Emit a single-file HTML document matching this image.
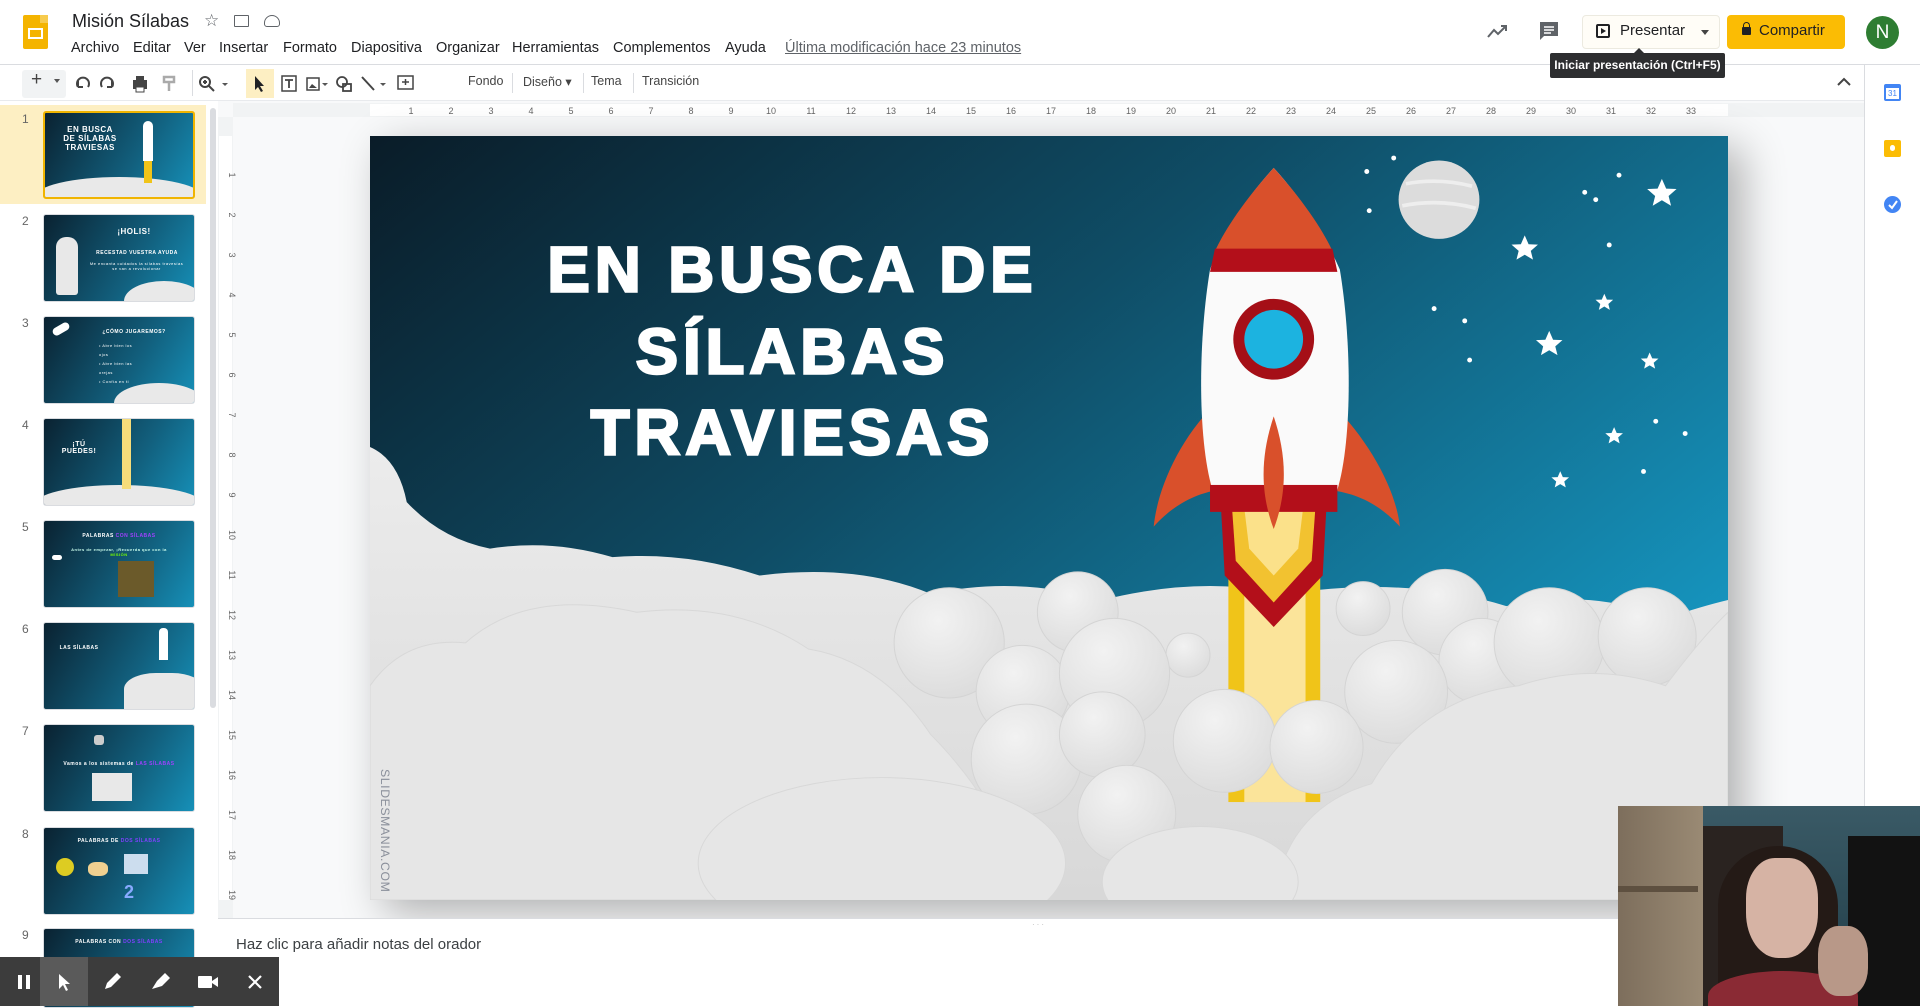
<!DOCTYPE html>
<html><head><meta charset="utf-8"><style>
*{box-sizing:border-box;margin:0;padding:0}
body{width:1920px;height:1006px;overflow:hidden;background:#fff;font-family:"Liberation Sans",Arial,sans-serif;position:relative;color:#3c4043}
.a{position:absolute}
.menu span{position:absolute;top:40px;font-size:14.5px;color:#202124;white-space:nowrap}
.tb{position:absolute;top:74px;font-size:12.5px;color:#444}
.num{position:absolute;left:22px;font-size:12px;color:#666}
.th{position:absolute;left:43px;width:152px;height:88px;border:1px solid #dadce0;border-radius:3px;overflow:hidden;background:linear-gradient(120deg,#0a2231,#12607e 60%,#1690b8)}
.th .cl{position:absolute;left:-10px;right:-10px;bottom:-20px;height:40px;background:#e9e9e9;border-radius:50% 50% 0 0}
.th .t{position:absolute;color:#fff;font-weight:bold;font-size:7px;text-align:center;letter-spacing:.5px}
.ctl{position:absolute;top:957px;width:48px;height:49px;display:flex;align-items:center;justify-content:center}
</style></head><body>

<!-- header -->
<div class="a" style="left:23px;top:15px;width:25px;height:34px;background:#f4b400;border-radius:2px"></div>
<div class="a" style="left:40px;top:15px;width:8px;height:8px;background:#f7cb4d"></div>
<div class="a" style="left:28px;top:28px;width:15px;height:11px;border:2px solid #fff"></div>
<div class="a" style="left:72px;top:11px;font-size:18px;color:#202124">Misión Sílabas</div>
<div class="a" style="left:204px;top:11px;font-size:17px;color:#5f6368">☆</div>
<div class="a" style="left:234px;top:15px;width:15px;height:12px;border:1.5px solid #5f6368;border-radius:1px"></div>
<div class="a" style="left:264px;top:15px;width:16px;height:12px;border:1.5px solid #5f6368;border-radius:8px 8px 3px 3px"></div>
<div class="menu">
<span style="left:71px">Archivo</span><span style="left:133px">Editar</span><span style="left:184px">Ver</span><span style="left:219px">Insertar</span><span style="left:283px">Formato</span><span style="left:351px">Diapositiva</span><span style="left:436px">Organizar</span><span style="left:512px">Herramientas</span><span style="left:613px">Complementos</span><span style="left:725px">Ayuda</span><span style="left:785px;color:#5f6368;text-decoration:underline">Última modificación hace 23 minutos</span>
</div>
<svg class="a" style="left:1486px;top:21px" width="24" height="20"><path d="M2 16 L8 9 L12 13 L20 5 M15 5 H20 V10" stroke="#5f6368" stroke-width="2" fill="none"/></svg>
<svg class="a" style="left:1538px;top:20px" width="22" height="22"><path d="M2 2 H20 V16 H6 L2 20 Z" fill="#5f6368"/><path d="M6 7H16M6 10H16M6 13H13" stroke="#fff" stroke-width="1.5"/></svg>
<div class="a" style="left:1582px;top:15px;width:138px;height:34px;border:1px solid #eceae0;border-radius:4px;background:#fffdf7"></div>
<div class="a" style="left:1596px;top:24px;width:14px;height:14px;border:2px solid #202124;border-radius:2px"></div>
<div class="a" style="left:1601px;top:28px;width:0;height:0;border-left:5px solid #202124;border-top:3px solid transparent;border-bottom:3px solid transparent"></div>
<div class="a" style="left:1620px;top:22px;font-size:15px;color:#202124">Presentar</div>
<div class="a" style="left:1701px;top:30px;border-left:4px solid transparent;border-right:4px solid transparent;border-top:5px solid #444"></div>
<div class="a" style="left:1727px;top:15px;width:118px;height:34px;background:#fbbc04;border-radius:4px"></div>
<div class="a" style="left:1742px;top:27px;width:9px;height:8px;background:#202124;border-radius:1px"></div>
<div class="a" style="left:1743px;top:22px;width:7px;height:7px;border:1.5px solid #202124;border-bottom:none;border-radius:4px 4px 0 0"></div>
<div class="a" style="left:1759px;top:22px;font-size:15px;color:#202124">Compartir</div>
<div class="a" style="left:1866px;top:16px;width:33px;height:33px;border-radius:50%;background:#2e7d32;color:#fff;font-size:19px;text-align:center;line-height:33px">N</div>
<div class="a" style="left:0;top:64px;width:1920px;height:1px;background:#dadce0"></div>

<!-- toolbar -->
<div class="a" style="left:22px;top:70px;width:44px;height:28px;background:#f1f3f4;border-radius:3px"></div>
<div class="tb" style="left:31px;top:69px;font-size:19px;color:#444">+</div>
<div class="tb" style="left:54px;top:79px;border-left:3px solid transparent;border-right:3px solid transparent;border-top:4px solid #555"></div>
<svg class="a" style="left:74px;top:75px" width="120" height="18"><path d="M4 12 A6 6 0 1 1 14 12 M4 12 V6 M4 12 H9" stroke="#444" stroke-width="2" fill="none"/><path d="M38 12 A6 6 0 1 0 28 12 M38 12 V6 M38 12 H33" stroke="#444" stroke-width="2" fill="none"/><rect x="59" y="5" width="14" height="9" fill="#444"/><rect x="62" y="1" width="8" height="4" fill="#444"/><rect x="62" y="12" width="8" height="5" fill="#fff" stroke="#444"/><path d="M90 2 H100 V7 H90Z M95 7 V16" stroke="#aaa" stroke-width="2.5" fill="none"/></svg>
<div class="a" style="left:192px;top:70px;width:1px;height:26px;background:#dadce0"></div>
<svg class="a" style="left:198px;top:75px" width="40" height="18"><circle cx="7" cy="7" r="5" stroke="#444" stroke-width="2" fill="none"/><path d="M11 11 L16 16 M5 7H9M7 5V9" stroke="#444" stroke-width="2"/><path d="M24 8 L30 8 L27 11Z" fill="#555"/></svg>
<div class="a" style="left:246px;top:69px;width:28px;height:29px;background:#fdefc3"></div>
<svg class="a" style="left:248px;top:73px" width="170" height="22"><path d="M7 3 V17 L10 14 L13 19 L15 18 L12 13 L16 13 Z" fill="#202124"/><rect x="34" y="3" width="14" height="15" stroke="#444" stroke-width="1.5" fill="none"/><path d="M37 7 H45 M41 7 V15" stroke="#444" stroke-width="1.8"/><rect x="59" y="5" width="12" height="12" stroke="#444" stroke-width="1.5" fill="none"/><path d="M61 15 L64 11 L69 15Z" fill="#444"/><path d="M74 10 L80 10 L77 13Z" fill="#555"/><circle cx="94" cy="9" r="5" stroke="#444" stroke-width="1.8" fill="none"/><rect x="95" y="11" width="8" height="7" stroke="#444" stroke-width="1.8" fill="none"/><path d="M114 4 L126 17" stroke="#444" stroke-width="2"/><path d="M132 10 L138 10 L135 13Z" fill="#555"/><rect x="150" y="3" width="15" height="13" stroke="#444" stroke-width="1.5" fill="none"/><path d="M154 9 H161 M157.5 6 V12" stroke="#444" stroke-width="1.5"/></svg>
<div class="tb" style="left:468px">Fondo</div>
<div class="a" style="left:512px;top:73px;width:1px;height:20px;background:#dadce0"></div>
<div class="tb" style="left:523px">Diseño ▾</div>
<div class="a" style="left:583px;top:73px;width:1px;height:20px;background:#dadce0"></div>
<div class="tb" style="left:591px">Tema</div>
<div class="a" style="left:633px;top:73px;width:1px;height:20px;background:#dadce0"></div>
<div class="tb" style="left:642px">Transición</div>
<svg class="a" style="left:1836px;top:77px" width="16" height="10"><path d="M2 8 L8 2 L14 8" stroke="#444" stroke-width="2" fill="none"/></svg>
<div class="a" style="left:0;top:100px;width:1864px;height:1px;background:#e8eaed"></div>

<!-- tooltip -->
<div class="a" style="left:1550px;top:53px;width:175px;height:25px;background:#2d2e30;border-radius:2px;color:#fff;font-size:12px;font-weight:bold;line-height:25px;text-align:center">Iniciar presentación (Ctrl+F5)</div>
<div class="a" style="left:1634px;top:48px;border-left:5px solid transparent;border-right:5px solid transparent;border-bottom:5px solid #2d2e30"></div>

<!-- right sidebar -->
<div class="a" style="left:1864px;top:65px;width:56px;height:941px;background:#fff;border-left:1px solid #dadce0"></div>
<div class="a" style="left:1884px;top:84px;width:17px;height:17px;border:2px solid #4285f4;border-radius:2px;font-size:8px;color:#4285f4;text-align:center;line-height:12px;border-top-width:4px">31</div>
<div class="a" style="left:1884px;top:140px;width:17px;height:17px;background:#fbbc04;border-radius:2px"></div>
<div class="a" style="left:1890px;top:145px;width:5px;height:6px;background:#fff;border-radius:3px"></div>
<div class="a" style="left:1884px;top:196px;width:17px;height:17px;background:#4285f4;border-radius:50%"></div>
<svg class="a" style="left:1884px;top:196px" width="17" height="17"><path d="M5 9 L8 12 L13 5" stroke="#fff" stroke-width="2" fill="none"/></svg>

<!-- filmstrip -->
<div class="a" style="left:0;top:105px;width:206px;height:99px;background:#fdefc3"></div>
<div class="a" style="left:210px;top:108px;width:6px;height:600px;background:#dadce0;border-radius:3px"></div>
<div class="num" style="top:112px">1</div><div class="num" style="top:214px">2</div><div class="num" style="top:316px">3</div><div class="num" style="top:418px">4</div><div class="num" style="top:520px">5</div><div class="num" style="top:622px">6</div><div class="num" style="top:724px">7</div><div class="num" style="top:827px">8</div><div class="num" style="top:928px">9</div>

<div class="th" style="top:111px;border:2px solid #f0b400"><div class="cl"></div><div class="t" style="left:15px;top:12px;width:60px;font-size:8px">EN BUSCA DE SÍLABAS TRAVIESAS</div><div class="a" style="left:98px;top:8px;width:10px;height:40px;background:#fff;border-radius:5px 5px 0 0"></div><div class="a" style="left:99px;top:48px;width:8px;height:22px;background:#f0c419"></div></div>
<div class="th" style="top:214px"><div class="cl" style="left:80px"></div><div class="a" style="left:12px;top:22px;width:22px;height:58px;background:#e8e8e8;border-radius:10px 10px 3px 3px"></div><div class="t" style="left:40px;top:12px;width:100px;font-size:8px">¡HOLIS!</div><div class="t" style="left:38px;top:35px;width:110px;font-size:5px">RECESTAD VUESTRA AYUDA</div><div class="t" style="left:45px;top:46px;width:95px;font-size:4px;font-weight:normal">Me encanta cuidados la sílabas travesías se van a revolucionar</div></div>
<div class="th" style="top:316px"><div class="cl" style="left:70px"></div><div class="t" style="left:50px;top:12px;width:80px;font-size:5px">¿CÓMO JUGAREMOS?</div><div class="t" style="left:55px;top:24px;width:40px;font-size:4px;font-weight:normal;text-align:left;line-height:9px">• Abre bien los ojos<br>• Abre bien las orejas<br>• Confía en ti</div><div class="a" style="left:8px;top:8px;width:18px;height:8px;background:#fff;border-radius:4px;transform:rotate(-30deg)"></div></div>
<div class="th" style="top:418px"><div class="cl"></div><div class="t" style="left:10px;top:22px;width:50px;font-size:7px">¡TÚ PUEDES!</div><div class="a" style="left:78px;top:0;width:9px;height:70px;background:#f6dc7a"></div></div>
<div class="th" style="top:520px"><div class="t" style="left:20px;top:12px;width:110px;font-size:5px">PALABRAS <span style="color:#a040ff">CON SÍLABAS</span></div><div class="t" style="left:20px;top:26px;width:110px;font-size:4px;color:#cfe">Antes de empezar, ¡Recuerda que con la <span style="color:#7f0">MÍSIÓN</span></div><div class="a" style="left:74px;top:40px;width:36px;height:36px;background:#6b5a2a"></div><div class="a" style="left:8px;top:34px;width:10px;height:5px;background:#fff;border-radius:3px"></div></div>
<div class="th" style="top:622px"><div class="a" style="left:80px;top:50px;width:80px;height:40px;background:#e8e8e8;border-radius:40% 40% 0 0"></div><div class="t" style="left:10px;top:22px;width:50px;font-size:5px">LAS SÍLABAS</div><div class="a" style="left:115px;top:5px;width:9px;height:32px;background:#fff;border-radius:4px 4px 0 0"></div></div>
<div class="th" style="top:724px"><div class="t" style="left:10px;top:36px;width:130px;font-size:5px">Vamos a los sistemas de <span style="color:#a040ff">LAS SÍLABAS</span></div><div class="a" style="left:48px;top:48px;width:40px;height:28px;background:#e8e8e8"></div><div class="a" style="left:50px;top:10px;width:10px;height:10px;background:#ccc;border-radius:3px"></div></div>
<div class="th" style="top:827px"><div class="t" style="left:15px;top:10px;width:120px;font-size:5px">PALABRAS DE <span style="color:#8040ff">DOS SÍLABAS</span></div><div class="a" style="left:12px;top:30px;width:18px;height:18px;background:#ddcc22;border-radius:50%"></div><div class="a" style="left:44px;top:34px;width:20px;height:14px;background:#f0d090;border-radius:40%"></div><div class="a" style="left:80px;top:26px;width:24px;height:20px;background:#cde"></div><div class="a" style="left:80px;top:54px;width:10px;height:16px;color:#8af;font-size:18px;font-weight:bold">2</div></div>
<div class="th" style="top:928px;height:80px"><div class="t" style="left:15px;top:10px;width:120px;font-size:5px">PALABRAS CON <span style="color:#8040ff">DOS SÍLABAS</span></div></div>

<!-- rulers & canvas -->
<div class="a" style="left:218px;top:101px;width:1646px;height:817px;background:#f8f9fa"></div>
<div class="a" style="left:233px;top:103px;width:1631px;height:14px;background:#f1f3f4"></div>
<div class="a" style="left:370px;top:104px;width:1358px;height:12px;background:#fff"></div>
<div class="a" style="left:218px;top:117px;width:15px;height:801px;background:#f1f3f4"></div>
<div class="a" style="left:219px;top:136px;width:13px;height:764px;background:#fff"></div>
<svg class="a" style="left:0;top:0" width="1864" height="920" font-family="Liberation Sans" font-size="9" fill="#666">
<g text-anchor="middle">
<text x="411" y="114">1</text><text x="451" y="114">2</text><text x="491" y="114">3</text><text x="531" y="114">4</text><text x="571" y="114">5</text><text x="611" y="114">6</text><text x="651" y="114">7</text><text x="691" y="114">8</text><text x="731" y="114">9</text><text x="771" y="114">10</text><text x="811" y="114">11</text><text x="851" y="114">12</text><text x="891" y="114">13</text><text x="931" y="114">14</text><text x="971" y="114">15</text><text x="1011" y="114">16</text><text x="1051" y="114">17</text><text x="1091" y="114">18</text><text x="1131" y="114">19</text><text x="1171" y="114">20</text><text x="1211" y="114">21</text><text x="1251" y="114">22</text><text x="1291" y="114">23</text><text x="1331" y="114">24</text><text x="1371" y="114">25</text><text x="1411" y="114">26</text><text x="1451" y="114">27</text><text x="1491" y="114">28</text><text x="1531" y="114">29</text><text x="1571" y="114">30</text><text x="1611" y="114">31</text><text x="1651" y="114">32</text><text x="1691" y="114">33</text>
</g>
<g text-anchor="middle">
<text transform="translate(229,175) rotate(90)">1</text><text transform="translate(229,215) rotate(90)">2</text><text transform="translate(229,255) rotate(90)">3</text><text transform="translate(229,295) rotate(90)">4</text><text transform="translate(229,335) rotate(90)">5</text><text transform="translate(229,375) rotate(90)">6</text><text transform="translate(229,415) rotate(90)">7</text><text transform="translate(229,455) rotate(90)">8</text><text transform="translate(229,495) rotate(90)">9</text><text transform="translate(229,535) rotate(90)">10</text><text transform="translate(229,575) rotate(90)">11</text><text transform="translate(229,615) rotate(90)">12</text><text transform="translate(229,655) rotate(90)">13</text><text transform="translate(229,695) rotate(90)">14</text><text transform="translate(229,735) rotate(90)">15</text><text transform="translate(229,775) rotate(90)">16</text><text transform="translate(229,815) rotate(90)">17</text><text transform="translate(229,855) rotate(90)">18</text><text transform="translate(229,895) rotate(90)">19</text>
</g>
</svg>

<!-- slide shadow -->
<div class="a" style="left:370px;top:136px;width:1358px;height:764px;box-shadow:14px 12px 40px rgba(0,0,0,.3)"></div>

<!-- slide -->
<svg class="a" style="left:370px;top:136px" width="1358" height="764" viewBox="302 111 1109 624" preserveAspectRatio="none">
<defs>
<linearGradient id="bg" x1="0" y1="0" x2="1" y2="0.7"><stop offset="0" stop-color="#0a1c28"/><stop offset="0.45" stop-color="#0f4d66"/><stop offset="1" stop-color="#1699c4"/></linearGradient>
<radialGradient id="cg" cx="0.4" cy="0.3" r="0.8"><stop offset="0" stop-color="#f2f2f2"/><stop offset="1" stop-color="#dadada"/></radialGradient>
<linearGradient id="bc" x1="0" y1="0" x2="0" y2="1"><stop offset="0" stop-color="#ececec"/><stop offset="1" stop-color="#d8d8d8"/></linearGradient>
</defs>
<rect x="302" y="111" width="1109" height="624" fill="url(#bg)"/>
<g fill="#fff">
<circle cx="1138" cy="129" r="2"/><circle cx="1116" cy="140" r="2"/><circle cx="1118" cy="172" r="2"/><circle cx="1294" cy="157" r="2"/><circle cx="1322" cy="143" r="2"/><circle cx="1303" cy="163" r="2"/><circle cx="1314" cy="200" r="2"/><circle cx="1171" cy="252" r="2"/><circle cx="1196" cy="262" r="2"/><circle cx="1200" cy="294" r="2"/><circle cx="1352" cy="344" r="2"/><circle cx="1376" cy="354" r="2"/><circle cx="1342" cy="385" r="2"/>
<g id="st"><path d="M0,-12 L3.5,-4 L12,-3.7 L5.5,2 L7.5,10 L0,5.5 L-7.5,10 L-5.5,2 L-12,-3.7 L-3.5,-4Z"/></g>
<use href="#st" transform="translate(1357,158)"/><use href="#st" transform="translate(1245,203) scale(.9)"/><use href="#st" transform="translate(1310,247) scale(.6)"/><use href="#st" transform="translate(1265,281) scale(.9)"/><use href="#st" transform="translate(1347,295) scale(.6)"/><use href="#st" transform="translate(1318,356) scale(.6)"/><use href="#st" transform="translate(1274,392) scale(.6)"/>
</g>
<ellipse cx="1175" cy="163" rx="33" ry="32" fill="#dcdcdc"/>
<path d="M1148 150 Q1175 145 1202 152 M1145 168 Q1175 162 1205 170" stroke="#eee" stroke-width="3" fill="none"/>
<g font-family="Liberation Sans" font-weight="bold" font-size="52" fill="#fff" text-anchor="middle" letter-spacing="4" style="paint-order:stroke" stroke="#fff" stroke-width="2">
<text x="647" y="238">EN BUSCA DE</text><text x="647" y="305">SÍLABAS</text><text x="647" y="371">TRAVIESAS</text>
</g>
<!-- back clouds -->
<path d="M302,735 L302,365 Q325,375 332,410 Q360,440 400,448 Q450,440 500,455 Q560,450 620,470 Q700,460 760,485 Q830,470 900,490 Q980,470 1050,485 Q1150,470 1230,495 Q1300,480 1360,505 Q1390,495 1411,490 L1411,735Z" fill="url(#bc)"/>
<rect x="1003" y="470" width="75" height="185" fill="#f0c419"/>
<rect x="1016" y="470" width="50" height="185" fill="#fbe49a"/>
<path d="M992,330 C962,360 945,400 942,430 C960,410 980,402 996,400Z" fill="#d9502b"/>
<path d="M1088,330 C1118,360 1140,400 1143,430 C1125,410 1105,402 1084,400Z" fill="#d9502b"/>
<path d="M997,415 L1083,415 L1080,470 L1040,512 L1000,470Z" fill="#b30f1a"/>
<path d="M1006,415 L1074,415 L1071,458 L1040,492 L1009,458Z" fill="#f2c230"/>
<path d="M1016,415 L1064,415 L1060,448 L1040,470 L1020,448Z" fill="#fbe18a"/>
<path d="M1040,137 C1010,170 995,200 988,220 C978,280 978,360 990,400 L1092,400 C1104,360 1104,280 1094,220 C1085,200 1070,170 1040,137Z" fill="#fafafa"/>
<path d="M1040,137 C1012,168 998,192 992,205 L1088,205 C1082,192 1068,168 1040,137Z" fill="#d9502b"/>
<path d="M992,203 L1088,203 L1092,222 L988,222Z" fill="#b30f1a"/>
<rect x="988" y="396" width="104" height="22" fill="#b30f1a"/>
<circle cx="1040" cy="277" r="33" fill="#a50f17"/><circle cx="1040" cy="277" r="24" fill="#1cb3e0"/>
<path d="M1040,340 C1030,370 1028,400 1040,432 C1052,400 1050,370 1040,340Z" fill="#d9502b"/>
<!-- front clouds -->
<g fill="url(#cg)" stroke="#d4d4d4" stroke-width="0.8">
<circle cx="775" cy="525" r="45"/><circle cx="880" cy="500" r="33"/><circle cx="970" cy="535" r="18"/><circle cx="1113" cy="497" r="22"/><circle cx="1180" cy="500" r="35"/><circle cx="1210" cy="540" r="35"/><circle cx="1265" cy="525" r="45"/><circle cx="1345" cy="520" r="40"/>
<circle cx="835" cy="565" r="38"/><circle cx="910" cy="550" r="45"/><circle cx="1140" cy="565" r="42"/>
<circle cx="838" cy="620" r="45"/><circle cx="900" cy="600" r="35"/><circle cx="1000" cy="605" r="42"/><circle cx="1075" cy="610" r="38"/><circle cx="920" cy="665" r="40"/>
</g>
<g fill="#e6e6e6" stroke="#d8d8d8" stroke-width="0.8">
<path d="M302,735 L302,560 Q330,520 380,525 Q430,480 520,500 Q600,490 660,530 Q720,540 760,600 Q800,640 830,700 L840,735Z"/>
<ellipse cx="720" cy="705" rx="150" ry="70"/>
<path d="M1040,735 Q1050,660 1120,640 Q1160,570 1240,560 Q1300,540 1360,560 Q1390,520 1411,500 L1411,735Z"/>
<ellipse cx="980" cy="720" rx="80" ry="45"/>
</g>
<text transform="translate(311,628) rotate(90)" font-family="Liberation Sans" font-size="10" fill="#8a8f9a" letter-spacing="0.5">SLIDESMANIA.COM</text>
</svg>

<!-- notes -->
<div class="a" style="left:218px;top:918px;width:1646px;height:88px;background:#fff;border-top:1px solid #dadce0"></div>
<div class="a" style="left:1032px;top:920px;font-size:8px;color:#bbb;letter-spacing:2px">···</div>
<div class="a" style="left:236px;top:936px;font-size:15px;color:#3c4043">Haz clic para añadir notas del orador</div>

<!-- webcam -->
<div class="a" style="left:1618px;top:806px;width:302px;height:200px;overflow:hidden;background:#1e3a44">
<div class="a" style="left:0;top:0;width:302px;height:200px;background:linear-gradient(180deg,#3a5a66,#1f3b46)"></div>
<div class="a" style="left:0;top:0;width:85px;height:200px;background:linear-gradient(90deg,#7d6e5c,#9a8a74)"></div>
<div class="a" style="left:0;top:80px;width:80px;height:6px;background:#5e5040"></div>
<div class="a" style="left:85px;top:20px;width:80px;height:180px;background:#2a2320"></div>
<div class="a" style="left:230px;top:30px;width:72px;height:170px;background:#121212"></div>
<div class="a" style="left:100px;top:40px;width:120px;height:170px;background:#241a16;border-radius:60px 60px 0 0"></div>
<div class="a" style="left:128px;top:52px;width:72px;height:100px;background:#d6b3a4;border-radius:40% 40% 45% 45%"></div>
<div class="a" style="left:90px;top:165px;width:150px;height:50px;background:#8a2a34;border-radius:50% 50% 0 0"></div>
<div class="a" style="left:200px;top:120px;width:50px;height:70px;background:#b89888;border-radius:40%"></div>
</div>

<!-- bottom-left controls -->
<div class="a" style="left:0;top:957px;width:279px;height:49px;background:#3c3c3c"></div>
<div class="ctl" style="left:0"><div style="width:4px;height:14px;background:#fff;margin-right:4px"></div><div style="width:4px;height:14px;background:#fff"></div></div>
<div class="ctl" style="left:40px;background:#5a5a5a"><svg width="16" height="20"><path d="M3 2 V17 L7 13 L10 19 L12 18 L9 12 L14 12Z" fill="#fff"/></svg></div>
<div class="ctl" style="left:88px"><svg width="22" height="22"><path d="M4 18 L6 12 L16 2 L20 6 L10 16Z" fill="#fff"/></svg></div>
<div class="ctl" style="left:136px"><svg width="22" height="22"><path d="M3 18 L8 10 L16 2 L21 7 L13 15 Z" fill="#fff"/></svg></div>
<div class="ctl" style="left:184px"><svg width="22" height="16"><rect x="1" y="2" width="14" height="12" rx="1" fill="#fff"/><path d="M15 7 L21 3 V13 L15 9Z" fill="#fff"/></svg></div>
<div class="ctl" style="left:231px"><svg width="16" height="16"><path d="M2 2 L14 14 M14 2 L2 14" stroke="#fff" stroke-width="2.2"/></svg></div>
</body></html>
